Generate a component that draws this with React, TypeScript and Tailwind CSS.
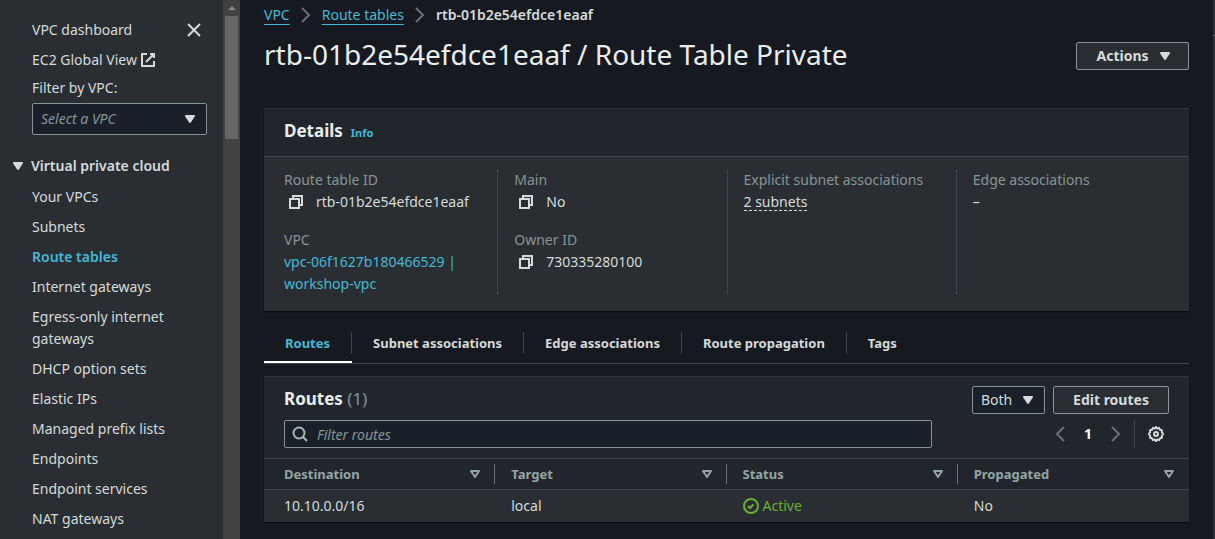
import type { ReactNode } from 'react';

function Icon({ children, className = 'text-[#d5dbdb]' }: { children: ReactNode; className?: string }) {
  return (
    <svg viewBox="0 0 16 16" fill="none" stroke="currentColor" strokeWidth="2" aria-hidden="true" className={`size-4 shrink-0 ${className}`}>
      {children}
    </svg>
  );
}

const CaretFilled = ({ className }: { className?: string }) => (
  <Icon className={className}>
    <path d="M4 5h8l-4 6z" fill="currentColor" strokeLinejoin="round" />
  </Icon>
);

const CaretOutline = () => (
  <Icon className="text-[#95a5a6]">
    <path d="M4 5h8l-4 6z" strokeLinejoin="round" />
  </Icon>
);

const ChevronRight = () => (
  <Icon className="text-[#687078]">
    <path d="m4 1 7 7-7 7" />
  </Icon>
);

const ChevronLeft = () => (
  <Icon className="text-[#687078]">
    <path d="M12 1 5 8l7 7" />
  </Icon>
);

const navItems = [
  'Your VPCs',
  'Subnets',
  'Route tables',
  'Internet gateways',
  'Egress-only internet gateways',
  'DHCP option sets',
  'Elastic IPs',
  'Managed prefix lists',
  'Endpoints',
  'Endpoint services',
  'NAT gateways',
];

const tabs = ['Routes', 'Subnet associations', 'Edge associations', 'Route propagation', 'Tags'];

const columns = ['Destination', 'Target', 'Status', 'Propagated'];

function Sidebar() {
  return (
    <aside className="flex w-60 shrink-0 bg-[#2a2e33]">
      <nav aria-label="VPC" className="flex-1 pt-[19px]">
        <div className="flex flex-col px-8 pr-4">
          <div className="flex items-center justify-between pr-[5px]">
            <a href="#dashboard">VPC dashboard</a>
            <button type="button" aria-label="Close navigation">
              <Icon>
                <path d="m2 2 12 12M14 2 2 14" />
              </Icon>
            </button>
          </div>
          <a href="#global-view" className="mt-2 flex items-center gap-[3px]">
            EC2 Global View
            <Icon>
              <path d="M10 2h4v4M6 10l8-8M14 9v5H2V2h5" />
            </Icon>
          </a>
          <label htmlFor="vpc-filter" className="mt-1.5">
            Filter by VPC:
          </label>
          <div className="relative mt-1">
            <select
              id="vpc-filter"
              className="h-8 w-full appearance-none rounded-xs border border-[#879596] bg-[#1a2029] pl-2 text-[#879596] italic"
            >
              <option>Select a VPC</option>
            </select>
            <span className="pointer-events-none absolute inset-y-0 right-[9px] flex items-center">
              <CaretFilled />
            </span>
          </div>
        </div>
        <button type="button" className="mt-5 flex items-center gap-[5px] pl-[10px] font-semibold">
          <CaretFilled />
          Virtual private cloud
        </button>
        <ul className="mt-[9px] flex flex-col gap-2 pr-10 pl-8">
          {navItems.map((item) => (
            <li key={item}>
              <a href="#nav" className={item === 'Route tables' ? 'block font-semibold text-[#44b9d6]' : 'block'}>
                {item}
              </a>
            </li>
          ))}
        </ul>
      </nav>
      <div className="flex w-[17px] flex-col items-center bg-[#424242]">
        <svg viewBox="0 0 16 16" aria-hidden="true" className="size-4 text-[#868686]">
          <path d="M4 10h8L8 6z" fill="currentColor" />
        </svg>
        <div className="h-[123px] w-[13px] bg-[#686868]" />
      </div>
    </aside>
  );
}

function CopyValue({ children }: { children: ReactNode }) {
  return (
    <div className="flex items-center gap-3 pl-1">
      <button type="button" aria-label="Copy">
        <Icon>
          <path d="M2 5h9v9H2zM5 5V2h9v9h-3" />
        </Icon>
      </button>
      {children}
    </div>
  );
}

function Field({ label, children }: { label: string; children: ReactNode }) {
  return (
    <div>
      <dt className="text-[#879596]">{label}</dt>
      <dd>{children}</dd>
    </div>
  );
}

function FieldColumn({ children, first = false }: { children: ReactNode; first?: boolean }) {
  return (
    <dl className={`flex flex-col gap-4 pr-[15px] pl-4 ${first ? '' : 'border-l border-[#414750]'}`}>{children}</dl>
  );
}

function Details() {
  return (
    <section className="mt-9 border-t border-[#30343a] bg-[#2a2e33] shadow-[0_1px_1px_0_#00000099]">
      <header className="flex items-baseline gap-2 border-b border-[#414750] bg-[#21252c] px-5 pt-[10px] pb-[13px]">
        <h2 className="text-[17px] leading-6 font-bold text-[#eaeded]">Details</h2>
        <a href="#info" className="text-[11px] leading-4 font-bold text-[#44b9d6]">
          Info
        </a>
      </header>
      <div className="grid grid-cols-4 px-1 pt-3 pb-4">
        <FieldColumn first>
          <Field label="Route table ID">
            <CopyValue>rtb-01b2e54efdce1eaaf</CopyValue>
          </Field>
          <Field label="VPC">
            <a href="#vpc" className="text-[#44b9d6]">
              vpc-06f1627b180466529 | workshop-vpc
            </a>
          </Field>
        </FieldColumn>
        <FieldColumn>
          <Field label="Main">
            <CopyValue>No</CopyValue>
          </Field>
          <Field label="Owner ID">
            <CopyValue>730335280100</CopyValue>
          </Field>
        </FieldColumn>
        <FieldColumn>
          <Field label="Explicit subnet associations">
            <button type="button" className="border-b border-dashed border-[#d5dbdb] leading-4">
              2 subnets
            </button>
          </Field>
        </FieldColumn>
        <FieldColumn>
          <Field label="Edge associations">–</Field>
        </FieldColumn>
      </div>
    </section>
  );
}

function Tabs() {
  return (
    <div role="tablist" className="mt-[21px] flex border-b border-[#414750] text-[13px]">
      {tabs.map((tab, i) => (
        <button
          key={tab}
          type="button"
          role="tab"
          aria-selected={i === 0}
          className={`flex flex-col font-bold ${i === 0 ? 'border-b-2 border-white pb-[7px] text-[#44b9d6]' : 'pb-[9px]'}`}
        >
          <span className={`border-r px-[21px] ${i === tabs.length - 1 ? 'border-transparent' : 'border-[#414750]'}`}>{tab}</span>
        </button>
      ))}
    </div>
  );
}

function Routes() {
  return (
    <section className="mt-3 border-t border-[#30343a] bg-[#21252c] shadow-[0_1px_1px_0_#00000099]">
      <header className="flex flex-col gap-1.5 px-5 pt-[9px] pb-[10px]">
        <div className="flex items-start gap-2">
          <h2 className="flex-1 text-[17px] leading-[26px] font-bold text-[#eaeded]">
            Routes <span className="font-normal text-[#879596]">(1)</span>
          </h2>
          <div className="relative">
            <select
              aria-label="Route filter"
              className="block h-7 w-[73px] appearance-none rounded-xs border border-[#879596] bg-[#1a2029] pl-2"
            >
              <option>Both</option>
            </select>
            <span className="pointer-events-none absolute inset-y-0 right-[9px] flex items-center">
              <CaretFilled />
            </span>
          </div>
          <button type="button" className="h-7 w-[116px] rounded-xs border border-[#879596] bg-[#2a2e33] font-bold">
            Edit routes
          </button>
        </div>
        <div className="flex items-center justify-between gap-8">
          <div className="relative max-w-[648px] flex-1">
            <span className="pointer-events-none absolute inset-y-0 left-2 flex items-center">
              <Icon className="text-[#aab7b8]">
                <circle cx="7" cy="7" r="5.5" />
                <path d="m15 15-4.2-4.2" />
              </Icon>
            </span>
            <input
              type="search"
              aria-label="Filter routes"
              placeholder="Filter routes"
              className="block h-7 w-full rounded-xs border border-[#879596] bg-[#1a2029] pl-8 placeholder:text-[#879596] placeholder:italic"
            />
          </div>
          <div className="flex h-7 items-center">
            <button type="button" aria-label="Previous page" className="flex w-7 justify-center">
              <ChevronLeft />
            </button>
            <button type="button" className="w-7 font-bold text-white">
              1
            </button>
            <button type="button" aria-label="Next page" className="flex w-7 justify-center">
              <ChevronRight />
            </button>
            <span className="ml-1 h-7 border-l border-[#414750]" />
            <button type="button" aria-label="Preferences" className="mr-[5px] ml-[13px]">
              <Icon>
                <path
                  d="M8 1 9.3 2.6 11.1 1.9 12 3.7 14 4.2 13.8 6.2 15.2 8 13.8 9.8 14 11.8 12 12.3 11.1 14.1 9.3 13.4 8 15 6.7 13.4 4.9 14.1 4 12.3 2 11.8 2.2 9.8 .8 8 2.2 6.2 2 4.2 4 3.7 4.9 1.9 6.7 2.6z"
                  strokeLinejoin="round"
                />
                <circle cx="8" cy="8" r="2" />
              </Icon>
            </button>
          </div>
        </div>
      </header>
      <table className="w-full table-fixed border-t border-[#414750] text-left">
        <thead>
          <tr className="border-b border-[#414750] text-[13px] text-[#95a5a6]">
            {columns.map((column, i) => (
              <th key={column} scope="col" className="h-[31px] py-0 pl-4 font-bold first:pl-5">
                <div
                  className={`flex h-5 items-center justify-between border-r pr-[11px] ${
                    i === columns.length - 1 ? 'border-transparent' : 'border-[#687078]'
                  }`}
                >
                  {column}
                  <CaretOutline />
                </div>
              </th>
            ))}
          </tr>
        </thead>
        <tbody>
          <tr className="h-8 bg-[#2a2e33]">
            <td className="pl-5">10.10.0.0/16</td>
            <td className="pl-4">local</td>
            <td className="pl-4">
              <span className="flex items-center gap-1 text-[#6aaf35]">
                <Icon className="text-[#6aaf35]">
                  <circle cx="8" cy="8" r="7" />
                  <path d="m5 8 2 2 3.5-3.5" />
                </Icon>
                Active
              </span>
            </td>
            <td className="pl-4">No</td>
          </tr>
        </tbody>
      </table>
    </section>
  );
}

export default function App() {
  return (
    <div className="flex min-h-screen bg-[#16191f] font-['Noto_Sans','Open_Sans',sans-serif] text-sm leading-[22px] text-[#d5dbdb]">
      <Sidebar />
      <main className="min-w-0 flex-1 px-6 pt-1">
        <nav aria-label="Breadcrumb">
          <ol className="flex items-center gap-2">
            <li>
              <a href="#vpc" className="text-[#44b9d6] underline underline-offset-4">
                VPC
              </a>
            </li>
            <li>
              <ChevronRight />
            </li>
            <li>
              <a href="#route-tables" className="text-[#44b9d6] underline underline-offset-4">
                Route tables
              </a>
            </li>
            <li>
              <ChevronRight />
            </li>
            <li className="font-semibold">rtb-01b2e54efdce1eaaf</li>
          </ol>
        </nav>
        <div className="mt-2.5 flex items-end justify-between gap-4">
          <h1 className="text-[28px] leading-9 text-[#eaeded]">rtb-01b2e54efdce1eaaf / Route Table Private</h1>
          <button
            type="button"
            className="mb-0.5 flex h-7 w-[113px] items-center justify-center gap-2 rounded-xs border border-[#879596] bg-[#2a2e33] pl-1 font-bold"
          >
            Actions
            <CaretFilled />
          </button>
        </div>
        <Details />
        <Tabs />
        <Routes />
      </main>
      <aside className="w-0.5 shrink-0 bg-[#2a2e33]">
        <div className="h-9 border-b border-[#545b64]" />
      </aside>
    </div>
  );
}
